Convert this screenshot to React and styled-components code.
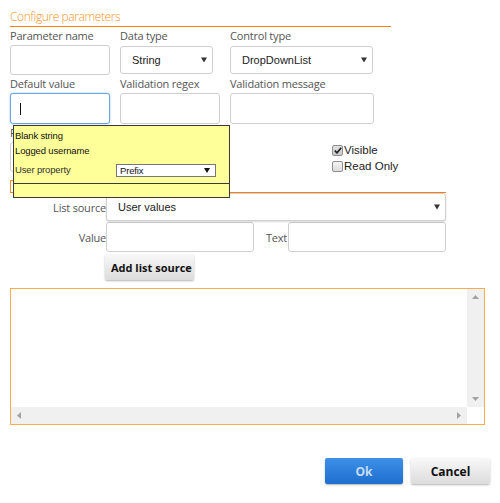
import React from 'react';
import styled, {createGlobalStyle} from 'styled-components';

const orange = '#f7941d';
const labelColor = '#555';
const inputBorder = '#cfcfcf';

const GlobalStyle = createGlobalStyle`
  body {
    margin: 0;
    background: #fff;
    font-family: "Open Sans", "Liberation Sans", sans-serif;
  }
  * { box-sizing: border-box; }
`;

const Page = styled.div`
  position: relative;
  width: 500px;
  height: 503px;
  padding: 9px 10px 0 10px;
  overflow: hidden;
`;

const Title = styled.div`
  width: 381px;
  color: ${orange};
  font-size: 12px;
  font-weight: 300;
  line-height: 16px;
  letter-spacing: -0.4px;
  padding-bottom: 1px;
  border-bottom: 1px solid #ff7f0f;
`;

const FieldGrid = styled.div`
  display: grid;
  grid-template-columns: 110px 110px 150px;
  margin-top: 1px;
`;

const Field = styled.div`
  display: flex;
  flex-direction: column;
  align-items: flex-start;
  height: 48px;
`;

const Label = styled.label`
  font-size: 11px;
  letter-spacing: -0.2px;
  line-height: 16px;
  color: ${labelColor};
  white-space: nowrap;
`;

const TextInput = styled.input`
  width: ${(p) => p.$w || 100}px;
  height: ${(p) => p.$h || 31}px;
  margin-top: ${(p) => (p.$mt !== undefined ? p.$mt : 1)}px;
  border: 1px solid ${(p) => (p.$focused ? '#6aa5e3' : inputBorder)};
  border-radius: 3px;
  box-shadow: ${(p) => (p.$focused ? '0 0 2px rgba(80, 150, 230, 0.6)' : 'none')};
  background: #fff;
  outline: none;
  font-family: "Liberation Sans", sans-serif;
  font-size: 11px;
  padding: 0 8px;
`;

const FocusWrap = styled.div`
  position: relative;
`;

const Caret = styled.span`
  position: absolute;
  left: 10px;
  top: 11px;
  width: 1px;
  height: 12px;
  background: #111;
`;

const SelectWrap = styled.div`
  position: relative;
  width: ${(p) => p.$w}px;
  height: 28px;
  margin-top: ${(p) => (p.$mt !== undefined ? p.$mt : 2)}px;
`;

const Select = styled.select`
  appearance: none;
  width: 100%;
  height: 100%;
  border: 1px solid ${inputBorder};
  border-radius: 3px;
  background: #fff;
  color: #222;
  font-family: "Liberation Sans", sans-serif;
  font-size: 11px;
  padding: 0 0 0 11px;
  outline: none;
  box-shadow: ${(p) => (p.$shadow ? '0 1px 2px rgba(0,0,0,0.15)' : 'none')};
`;

const Arrow = styled.span`
  position: absolute;
  right: 6px;
  top: 50%;
  transform: translateY(-50%);
  width: 0;
  height: 0;
  border-left: 3.5px solid transparent;
  border-right: 3.5px solid transparent;
  border-top: 5px solid #333;
  pointer-events: none;
`;

const OptionsRow = styled.div`
  display: flex;
  height: 50px;
`;

const PromptField = styled.div`
  width: 322px;
  padding-top: 1px;
  display: flex;
  flex-direction: column;
  align-items: flex-start;
`;

const CheckList = styled.div`
  padding-top: 18px;
  display: flex;
  flex-direction: column;
`;

const CheckRow = styled.label`
  display: flex;
  align-items: center;
  height: 18px;
  font-family: "Liberation Sans", sans-serif;
  font-size: 11.5px;
  color: #222;
`;

const CheckBox = styled.span`
  display: flex;
  align-items: center;
  justify-content: center;
  width: 11px;
  height: 11px;
  margin-right: 1px;
  border: 1px solid #8e8e8e;
  border-radius: 2px;
  background: ${(p) =>
    p.$checked
      ? 'linear-gradient(#e2e2e2, #c9c9c9)'
      : 'linear-gradient(#f4f4f4, #dcdcdc)'};
`;

const Tick = () => (
  <svg width="8" height="7" viewBox="0 0 8 7">
    <path d="M0.8 3.6 L3 5.8 L7.2 0.8" fill="none" stroke="#222" strokeWidth="1.7" />
  </svg>
);

const SectionHead = styled.div`
  width: 436px;
  height: 19px;
  display: flex;
  align-items: flex-end;
  border-bottom: 1px solid #ff7f0f;
`;

const SectionTab = styled.div`
  height: 12px;
  padding: 0 4px;
  border: 1px solid ${orange};
  border-bottom: none;
  font-size: 10px;
  line-height: 11px;
  color: ${labelColor};
`;

const FormRow = styled.div`
  display: flex;
  align-items: center;
  margin-top: ${(p) => p.$mt || 0}px;
`;

const RowLabel = styled.span`
  width: ${(p) => p.$w || 96}px;
  text-align: right;
  font-size: 11px;
  letter-spacing: -0.2px;
  color: ${labelColor};
  white-space: nowrap;
  padding-right: ${(p) => p.$pr || 0}px;
`;

const GrayButton = styled.button`
  height: 26px;
  padding: 0 6px;
  border: none;
  border-radius: 2px;
  background: linear-gradient(#f8f8f8, #dcdcdc);
  box-shadow: 0 1px 2px rgba(0, 0, 0, 0.3);
  font-family: "Open Sans", "Liberation Sans", sans-serif;
  font-size: 11px;
  font-weight: bold;
  color: #111;
  white-space: nowrap;
`;

const AddButton = styled(GrayButton)`
  margin: 2px 0 0 95px;
  width: 89px;
`;

const TextBox = styled.div`
  margin-top: 8px;
  width: 475px;
  height: 137px;
  border: 1px solid #f9ad4f;
  display: grid;
  grid-template-columns: 1fr 17px;
  grid-template-rows: 1fr 17px;
`;

const TextArea = styled.textarea`
  border: none;
  outline: none;
  resize: none;
  overflow: hidden;
  background: #fff;
`;

const ScrollTrack = styled.div`
  background: #f0f0f0;
  display: flex;
  flex-direction: ${(p) => (p.$vertical ? 'column' : 'row')};
  justify-content: space-between;
  align-items: center;
  padding: ${(p) => (p.$vertical ? '6px 0' : '0 6px')};
`;

const Corner = styled.div`
  background: #fff;
`;

const ScrollArrow = ({dir}) => {
  const pts = {
    up: '0,4 3.5,0 7,4',
    down: '0,0 7,0 3.5,4',
    left: '4,0 4,7 0,3.5',
    right: '0,0 0,7 4,3.5',
  }[dir];
  const vertical = dir === 'up' || dir === 'down';
  return (
    <svg width={vertical ? 7 : 4} height={vertical ? 4 : 7}>
      <polygon points={pts} fill="#a3a3a3" />
    </svg>
  );
};

const Footer = styled.div`
  display: flex;
  justify-content: flex-end;
  gap: 8px;
  margin-top: 33px;
`;

const OkButton = styled.button`
  width: 78px;
  height: 26px;
  border: none;
  border-radius: 2px;
  background: linear-gradient(#3d90e8, #1f6ecf);
  box-shadow: 0 1px 2px rgba(0, 0, 0, 0.3);
  font-family: "Open Sans", "Liberation Sans", sans-serif;
  font-size: 12px;
  font-weight: bold;
  color: #c9dcf3;
`;

const CancelButton = styled(GrayButton)`
  width: 79px;
  font-size: 12px;
`;

/* default value picker, lying over the form */
const Popup = styled.div`
  position: absolute;
  left: 13px;
  top: 125px;
  width: 217px;
  height: 73px;
  background: #ffff99;
  border: 1px solid #3a3a3a;
  font-family: "Liberation Sans", sans-serif;
  font-size: 9.5px;
  color: #111;
  padding-top: 2px;
`;

const PopupOption = styled.div`
  height: ${(p) => p.$h || 15}px;
  line-height: ${(p) => p.$h || 15}px;
  padding-left: 1px;
  display: flex;
  align-items: center;
  letter-spacing: -0.15px;
  color: ${(p) => (p.$muted ? '#333' : '#111')};
`;

const PopupLabel = styled.span`
  width: 101px;
`;

const MiniSelect = styled.div`
  position: relative;
  width: 100px;
  height: 13px;
  border: 1px solid #777;
  background: #fff;
  line-height: 11px;
  padding-left: 3px;
  color: #111;
`;

const MiniArrow = styled.span`
  position: absolute;
  right: 5px;
  top: 3px;
  width: 0;
  height: 0;
  border-left: 3.5px solid transparent;
  border-right: 3.5px solid transparent;
  border-top: 5px solid #111;
`;

const PopupFoot = styled.div`
  border-top: 1px solid #3a3a3a;
  margin-top: 1px;
  height: 14px;
`;

const App = () => {
  return (
    <Page>
      <GlobalStyle />
      <Title>Configure parameters</Title>
      <FieldGrid>
        <Field>
          <Label>Parameter name</Label>
          <TextInput $w={100} $h={30} />
        </Field>
        <Field>
          <Label>Data type</Label>
          <SelectWrap $w={93}>
            <Select defaultValue="String">
              <option>String</option>
              <option>Number</option>
            </Select>
            <Arrow />
          </SelectWrap>
        </Field>
        <Field>
          <Label>Control type</Label>
          <SelectWrap $w={143}>
            <Select defaultValue="DropDownList">
              <option>TextBox</option>
              <option>DropDownList</option>
            </Select>
            <Arrow />
          </SelectWrap>
        </Field>
        <Field>
          <Label>Default value</Label>
          <FocusWrap>
            <TextInput $w={100} $focused />
            <Caret />
          </FocusWrap>
        </Field>
        <Field>
          <Label>Validation regex</Label>
          <TextInput $w={100} />
        </Field>
        <Field>
          <Label>Validation message</Label>
          <TextInput $w={144} />
        </Field>
      </FieldGrid>
      <OptionsRow>
        <PromptField>
          <Label>P</Label>
          <TextInput $w={210} $h={30} />
        </PromptField>
        <CheckList>
          <CheckRow>
            <CheckBox $checked>
              <Tick />
            </CheckBox>
            Visible
          </CheckRow>
          <CheckRow>
            <CheckBox />
            Read Only
          </CheckRow>
        </CheckList>
      </OptionsRow>
      <SectionHead>
        <SectionTab>D</SectionTab>
      </SectionHead>
      <FormRow>
        <RowLabel>List source</RowLabel>
        <SelectWrap $w={340} $mt={0}>
          <Select defaultValue="User values" $shadow>
            <option>User values</option>
            <option>Database query</option>
          </Select>
          <Arrow />
        </SelectWrap>
      </FormRow>
      <FormRow $mt={1}>
        <RowLabel>Value</RowLabel>
        <TextInput $w={148} $h={30} $mt={0} />
        <RowLabel $w={34} $pr={1}>
          Text
        </RowLabel>
        <TextInput $w={158} $h={30} $mt={0} />
      </FormRow>
      <AddButton>Add list source</AddButton>
      <TextBox>
        <TextArea />
        <ScrollTrack $vertical>
          <ScrollArrow dir="up" />
          <ScrollArrow dir="down" />
        </ScrollTrack>
        <ScrollTrack>
          <ScrollArrow dir="left" />
          <ScrollArrow dir="right" />
        </ScrollTrack>
        <Corner />
      </TextBox>
      <Footer>
        <OkButton>Ok</OkButton>
        <CancelButton>Cancel</CancelButton>
      </Footer>
      <Popup>
        <PopupOption>Blank string</PopupOption>
        <PopupOption>Logged username</PopupOption>
        <PopupOption $h={24} $muted>
          <PopupLabel>User property</PopupLabel>
          <MiniSelect>
            Prefix
            <MiniArrow />
          </MiniSelect>
        </PopupOption>
        <PopupFoot />
      </Popup>
    </Page>
  );
};

export default App;
